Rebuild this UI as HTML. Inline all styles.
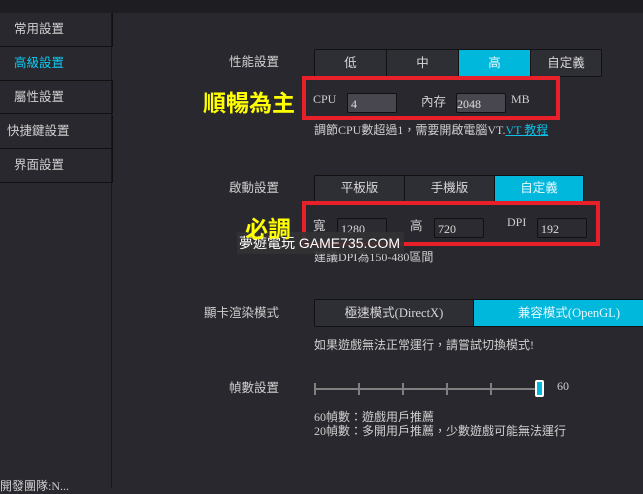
<!DOCTYPE html><html><head><meta charset="utf-8"><style>
*{margin:0;padding:0;box-sizing:border-box}
body{width:643px;height:488px;background:#28282e;position:relative;overflow:hidden;font-family:"Liberation Serif","Noto Sans CJK TC",serif;color:#cfcfcf;font-size:12px}
.a{position:absolute;white-space:nowrap}
.top{left:0;top:0;width:643px;height:13px;background:#1e1e22}
.side{left:0;top:13px;width:112px;height:475px;border-right:1px solid #18181b;background:#28282e}
.it{position:absolute;left:0;width:113px;height:34px;border-bottom:1px solid #111;border-right:1px solid #111;line-height:33px;padding-left:14px;font-size:12.5px;color:#d0d0d0;font-family:"Liberation Sans","Noto Sans CJK TC",sans-serif}
.lbl{font-family:"Liberation Sans","Noto Sans CJK TC",sans-serif;font-size:12.5px;color:#cfcfcf}
.seg{position:absolute;display:flex;border:1px solid #111;border-radius:2px}
.seg div{border-right:1px solid #111;background:#2e2e35;text-align:center;color:#d8d8d8;font-family:"Liberation Sans","Noto Sans CJK TC",sans-serif;font-size:12.5px}
.seg div.on{background:#00b8dc;color:#e8f8ff}
.inp{position:absolute;background:#48474f;border:1px solid #111;border-radius:2px;height:20px;font-size:12px;padding:3px 0 0 3px;color:#ddd}
.inp2{background:#2b2b31}
.red{position:absolute;border:4px solid #e8202a}
.y{font-family:"Liberation Sans","Noto Sans CJK TC",sans-serif;font-weight:bold;font-size:23px;color:#ffff00}
.tk{position:absolute;top:383px;width:2px;height:12px;background:#808080}
</style></head><body>
<div class="a top"></div>
<div class="a side"></div>
<div class="it" style="top:13px">常用設置</div>
<div class="it" style="top:47px;color:#10c8f0;border-right:none;border-bottom:1px solid #18181b">高級設置</div>
<div class="it" style="top:80px;border-top:1px solid #111">屬性設置</div>
<div class="it" style="top:115px;padding-left:7px">快捷鍵設置</div>
<div class="it" style="top:149px">界面設置</div>
<div class="a" style="left:0;top:477px;font-size:12px">開發團隊:N...</div>

<div class="a lbl" style="left:229px;top:51px">性能設置</div>
<div class="seg" style="left:314px;top:49px;height:28px">
<div style="width:72px;line-height:26px">低</div><div style="width:72px;line-height:26px">中</div><div class="on" style="width:72px;line-height:26px">高</div><div style="width:70px;line-height:26px;border-right:none">自定義</div></div>
<div class="red" style="left:302px;top:76px;width:258px;height:44px"></div>
<div class="a" style="left:313px;top:92px">CPU</div>
<div class="inp" style="left:347px;top:93px;width:50px">4</div>
<div class="a lbl" style="left:421px;top:91px">內存</div>
<div class="inp" style="left:456px;top:93px;width:50px;padding-left:0">2048</div>
<div class="a" style="left:511px;top:92px">MB</div>
<div class="a" style="left:314px;top:121px">調節CPU數超過1，需要開啟電腦VT.<span style="color:#10c0e8;text-decoration:underline">VT 教程</span></div>
<div class="a y" style="left:203px;top:84px">順暢為主</div>

<div class="a lbl" style="left:229px;top:177px">啟動設置</div>
<div class="seg" style="left:314px;top:175px;height:27px">
<div style="width:90px;line-height:25px">平板版</div><div style="width:90px;line-height:25px">手機版</div><div class="on" style="width:88px;line-height:25px;border-right:none">自定義</div></div>
<div class="red" style="left:302px;top:201px;width:298px;height:45px"></div>
<div class="a lbl" style="left:313px;top:215px">寬</div>
<div class="inp inp2" style="left:337px;top:218px;width:50px">1280</div>
<div class="a lbl" style="left:410px;top:215px">高</div>
<div class="inp inp2" style="left:434px;top:218px;width:50px">720</div>
<div class="a" style="left:507px;top:215px">DPI</div>
<div class="inp inp2" style="left:537px;top:218px;width:50px">192</div>
<div class="a" style="left:314px;top:248px">建議DPI為150-480區間</div>
<div class="a" style="left:237px;top:232px;width:167px;height:22px;background:rgba(50,50,52,.9);color:#fff;font-family:'Liberation Sans','Noto Sans CJK TC',sans-serif;font-size:14px;line-height:22px;padding-left:2px">夢遊電玩 GAME735.COM</div>
<div class="a y" style="left:245px;top:210px">必調</div>

<div class="a lbl" style="left:204px;top:302px">顯卡渲染模式</div>
<div class="seg" style="left:314px;top:299px;height:28px;width:340px">
<div style="width:160px;line-height:26px;font-family:'Liberation Serif','Noto Sans CJK TC',serif">極速模式(DirectX)</div><div class="on" style="width:180px;line-height:26px;border-right:none;font-family:'Liberation Serif','Noto Sans CJK TC',serif;text-align:left;padding-left:44px">兼容模式(OpenGL)</div></div>
<div class="a" style="left:314px;top:336px">如果遊戲無法正常運行，請嘗試切換模式!</div>

<div class="a lbl" style="left:229px;top:377px">幀數設置</div>
<div class="a" style="left:314px;top:388px;width:225px;height:2px;background:#808080"></div>
<div class="tk" style="left:314px"></div>
<div class="tk" style="left:358px"></div>
<div class="tk" style="left:402px"></div>
<div class="tk" style="left:446px"></div>
<div class="tk" style="left:490px"></div>
<div class="a" style="left:535px;top:380px;width:9px;height:17px;background:#00b8dc;border:2px solid #fff;border-radius:2px"></div>
<div class="a" style="left:557px;top:379px">60</div>
<div class="a" style="left:314px;top:410px;line-height:14px">60幀數：遊戲用戶推薦<br>20幀數：多開用戶推薦，少數遊戲可能無法運行</div>
</body></html>
